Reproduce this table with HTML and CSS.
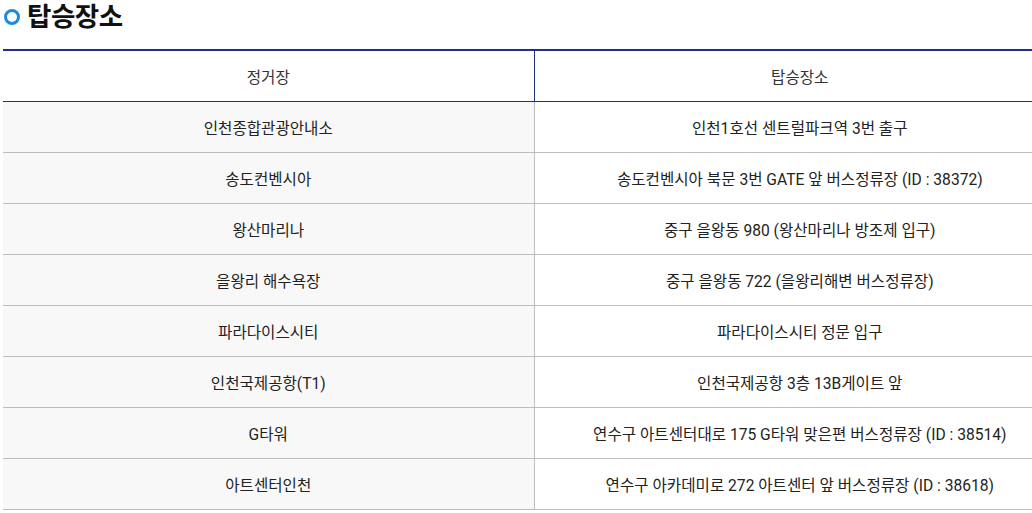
FILE: index.html
```html
<!DOCTYPE html>
<html lang="ko">
<head>
<meta charset="utf-8">
<link rel="stylesheet" href="styles.css">
</head>
<body>
<div class="wrap">
  <h3 class="title"><span class="dot"></span>탑승장소</h3>
  <table class="board">
    <thead>
      <tr><th>정거장</th><th>탑승장소</th></tr>
    </thead>
    <tbody>
      <tr><td>인천종합관광안내소</td><td>인천1호선 센트럴파크역 3번 출구</td></tr>
      <tr><td>송도컨벤시아</td><td>송도컨벤시아 북문 3번 GATE 앞 버스정류장 (ID : 38372)</td></tr>
      <tr><td>왕산마리나</td><td>중구 을왕동 980 (왕산마리나 방조제 입구)</td></tr>
      <tr><td>을왕리 해수욕장</td><td>중구 을왕동 722 (을왕리해변 버스정류장)</td></tr>
      <tr><td>파라다이스시티</td><td>파라다이스시티 정문 입구</td></tr>
      <tr><td>인천국제공항(T1)</td><td>인천국제공항 3층 13B게이트 앞</td></tr>
      <tr><td>G타워</td><td>연수구 아트센터대로 175 G타워 맞은편 버스정류장 (ID : 38514)</td></tr>
      <tr><td>아트센터인천</td><td>연수구 아카데미로 272 아트센터 앞 버스정류장 (ID : 38618)</td></tr>
    </tbody>
  </table>
</div>
</body>
</html>
```

FILE: styles.css
```css
html, body {
  margin: 0;
  padding: 0;
  overflow: hidden;
  background: #fff;
}
body {
  font-family: Roboto, "Noto Sans CJK KR", sans-serif;
  color: #222;
}
.wrap {
  padding-left: 3px;
  width: 1062px;
}
.title {
  margin: 0;
  height: 49px;
  display: flex;
  align-items: flex-start;
  gap: 7px;
  font-size: 26.5px;
  font-weight: 700;
  line-height: 34px;
  color: #111;
  letter-spacing: -0.5px;
}
.dot {
  width: 10px;
  height: 10px;
  border: 3px solid #1a8ae3;
  border-radius: 50%;
  margin-top: 9px;
  margin-left: 1px;
  flex: none;
}
.board {
  width: 1062px;
  border-collapse: collapse;
  table-layout: fixed;
  border-top: 2px solid #1f2f8a;
  font-size: 15.6px;
}
.board th {
  height: 50px;
  font-weight: 400;
  color: #333;
  border-bottom: 1px solid #1f2f8a;
  text-align: center;
  padding: 0;
}
.board th + th {
  border-left: 1px solid #1f2f8a;
}
.board td {
  height: 50px;
  text-align: center;
  padding: 0;
  border-bottom: 1px solid #bdbdbd;
  color: #222;
}
.board td:first-child {
  background: #f8f8f8;
}
.board td + td {
  border-left: 1px solid #bdbdbd;
}
```
